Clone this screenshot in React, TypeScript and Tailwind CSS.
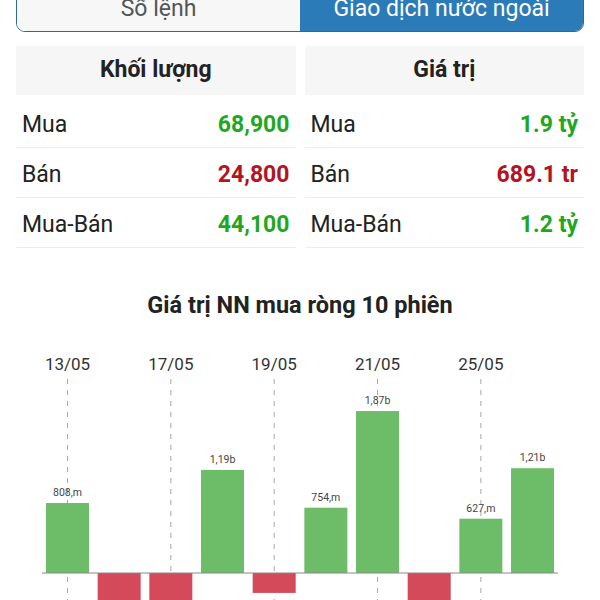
import React from 'react';

const font = { fontFamily: 'Roboto, "Noto Sans", sans-serif' };

type Row = { label: string; value: string; up: boolean };

const volume: Row[] = [
  { label: 'Mua', value: '68,900', up: true },
  { label: 'Bán', value: '24,800', up: false },
  { label: 'Mua-Bán', value: '44,100', up: true },
];

const amount: Row[] = [
  { label: 'Mua', value: '1.9 tỷ', up: true },
  { label: 'Bán', value: '689.1 tr', up: false },
  { label: 'Mua-Bán', value: '1.2 tỷ', up: true },
];

// net foreign buy, in billions
const bars = [
  { v: 0.808, label: '808,m', date: '13/05' },
  { v: -0.45 },
  { v: -0.5, date: '17/05' },
  { v: 1.19, label: '1,19b' },
  { v: -0.23, date: '19/05' },
  { v: 0.754, label: '754,m' },
  { v: 1.87, label: '1,87b', date: '21/05' },
  { v: -0.6 },
  { v: 0.627, label: '627,m', date: '25/05' },
  { v: 1.21, label: '1,21b' },
];

function StatColumn({ title, rows }: { title: string; rows: Row[] }) {
  return (
    <div className="flex-1 flex flex-col">
      <div className="h-[49px] bg-[#f6f6f6] flex items-center justify-center text-[23px] font-bold text-[#222]">
        {title}
      </div>
      <div className="mt-[3px]">
        {rows.map(r => (
          <div key={r.label} className="h-[50px] flex items-center justify-between px-[6px] pt-[5px] border-b border-[#ededed]">
            <span className="text-[23px] text-[#222]">{r.label}</span>
            <span className={`text-[23px] font-bold ${r.up ? 'text-[#1fa71f]' : 'text-[#b3141e]'}`}>{r.value}</span>
          </div>
        ))}
      </div>
    </div>
  );
}

function Chart() {
  const base = 572;
  const scale = 86.6;
  const x0 = 67.5;
  const step = 51.67;
  const w = 43;
  return (
    <svg width={600} height={281} viewBox="0 319 600 281" className="block">
      {bars.map((b, i) =>
        b.date ? (
          <g key={'d' + i}>
            <text x={x0 + i * step} y={369} textAnchor="middle" fontSize={17} fill="#333" style={font}>
              {b.date}
            </text>
            <line x1={x0 + i * step} y1={378} x2={x0 + i * step} y2={600} stroke="#a8a8a8" strokeWidth={1} strokeDasharray="5 6" />
          </g>
        ) : null
      )}
      {bars.map((b, i) => {
        const h = Math.abs(b.v) * scale;
        const cx = x0 + i * step;
        return (
          <rect
            key={'b' + i}
            x={cx - w / 2}
            y={b.v > 0 ? base - h : base}
            width={w}
            height={h}
            fill={b.v > 0 ? '#6dbd68' : '#d54a5a'}
          />
        );
      })}
      <line x1={42} y1={base} x2={558} y2={base} stroke="#8a8a8a" strokeWidth={1.2} />
      {bars.map((b, i) =>
        b.label ? (
          <text key={'l' + i} x={x0 + i * step} y={base - b.v * scale - 7} textAnchor="middle" fontSize={10.5} fill="#444" style={font}>
            {b.label}
          </text>
        ) : null
      )}
    </svg>
  );
}

export default function App() {
  return (
    <div className="w-[600px] h-[600px] overflow-hidden bg-white" style={font}>
      {/* Tabs */}
      <div className="mx-4 -mt-[14px] h-[46px] flex border-[1.5px] border-[#2a6a93] rounded-b-[9px] overflow-hidden">
        <div className="flex-1 bg-[#f7f7f7] flex items-center justify-center text-[23px] text-[#555]">Sổ lệnh</div>
        <div className="flex-1 bg-[#2b7bb8] flex items-center justify-center text-[23px] text-white">Giao dịch nước ngoài</div>
      </div>

      {/* Stats */}
      <div className="mx-4 mt-[14px] flex gap-[9px]">
        <StatColumn title="Khối lượng" rows={volume} />
        <StatColumn title="Giá trị" rows={amount} />
      </div>

      {/* Chart */}
      <div className="mt-[44px] h-[28px] flex items-center justify-center text-[23.5px] font-bold text-[#222]">
        Giá trị NN mua ròng 10 phiên
      </div>
      <Chart />
    </div>
  );
}
